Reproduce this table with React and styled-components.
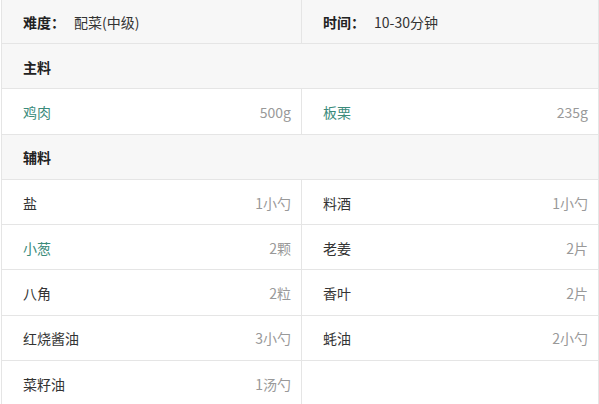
import React from "react";
import styled, { createGlobalStyle } from "styled-components";

const GlobalStyle = createGlobalStyle`
  html, body {
    margin: 0;
    padding: 0;
    background: #fff;
  }
  body {
    font-family: "Microsoft YaHei", "Noto Sans CJK SC", "Noto Sans", sans-serif;
    font-size: 14px;
    color: #333;
  }
`;

const Table = styled.div`
  margin-left: 1px;
  width: 598px;
  box-sizing: border-box;
  border-left: 1px solid #e5e5e5;
  border-right: 1px solid #e5e5e5;
  display: grid;
  grid-template-columns: 300px 1fr;
`;

const Cell = styled.div`
  box-sizing: border-box;
  height: ${(p) => (p.$top ? "44px" : "45.3px")};
  display: flex;
  align-items: center;
  justify-content: space-between;
  padding: 1px 10px 0 21px;
  background: ${(p) => (p.$shade ? "#f7f7f7" : "#fff")};
  border-bottom: 1px solid #e5e5e5;
  border-right: ${(p) => (p.$left ? "1px solid #e5e5e5" : "none")};
`;

const SectionCell = styled(Cell)`
  grid-column: 1 / -1;
  font-weight: bold;
  color: #222;
`;

const Label = styled.span`
  font-weight: bold;
  color: #222;
  margin-right: 9px;
`;

const Name = styled.span`
  color: ${(p) => (p.$link ? "#3b8b7b" : "#333")};
`;

const Qty = styled.span`
  color: #999;
`;

const main = [
  { name: "鸡肉", qty: "500g", link: true },
  { name: "板栗", qty: "235g", link: true },
];

const extra = [
  { name: "盐", qty: "1小勺" },
  { name: "料酒", qty: "1小勺" },
  { name: "小葱", qty: "2颗", link: true },
  { name: "老姜", qty: "2片" },
  { name: "八角", qty: "2粒" },
  { name: "香叶", qty: "2片" },
  { name: "红烧酱油", qty: "3小勺" },
  { name: "蚝油", qty: "2小勺" },
  { name: "菜籽油", qty: "1汤勺" },
  null,
];

const renderItems = (items) =>
  items.map((item, i) => (
    <Cell key={i} $left={i % 2 === 0}>
      {item && (
        <>
          <Name $link={item.link}>{item.name}</Name>
          <Qty>{item.qty}</Qty>
        </>
      )}
    </Cell>
  ));

const App = () => (
  <>
    <GlobalStyle />
    <Table>
      <Cell $shade $left $top>
        <div>
          <Label>难度：</Label>
          <span>配菜(中级)</span>
        </div>
      </Cell>
      <Cell $shade $top>
        <div>
          <Label>时间：</Label>
          <span>10-30分钟</span>
        </div>
      </Cell>
      <SectionCell $shade>主料</SectionCell>
      {renderItems(main)}
      <SectionCell $shade>辅料</SectionCell>
      {renderItems(extra)}
    </Table>
  </>
);

export default App;
